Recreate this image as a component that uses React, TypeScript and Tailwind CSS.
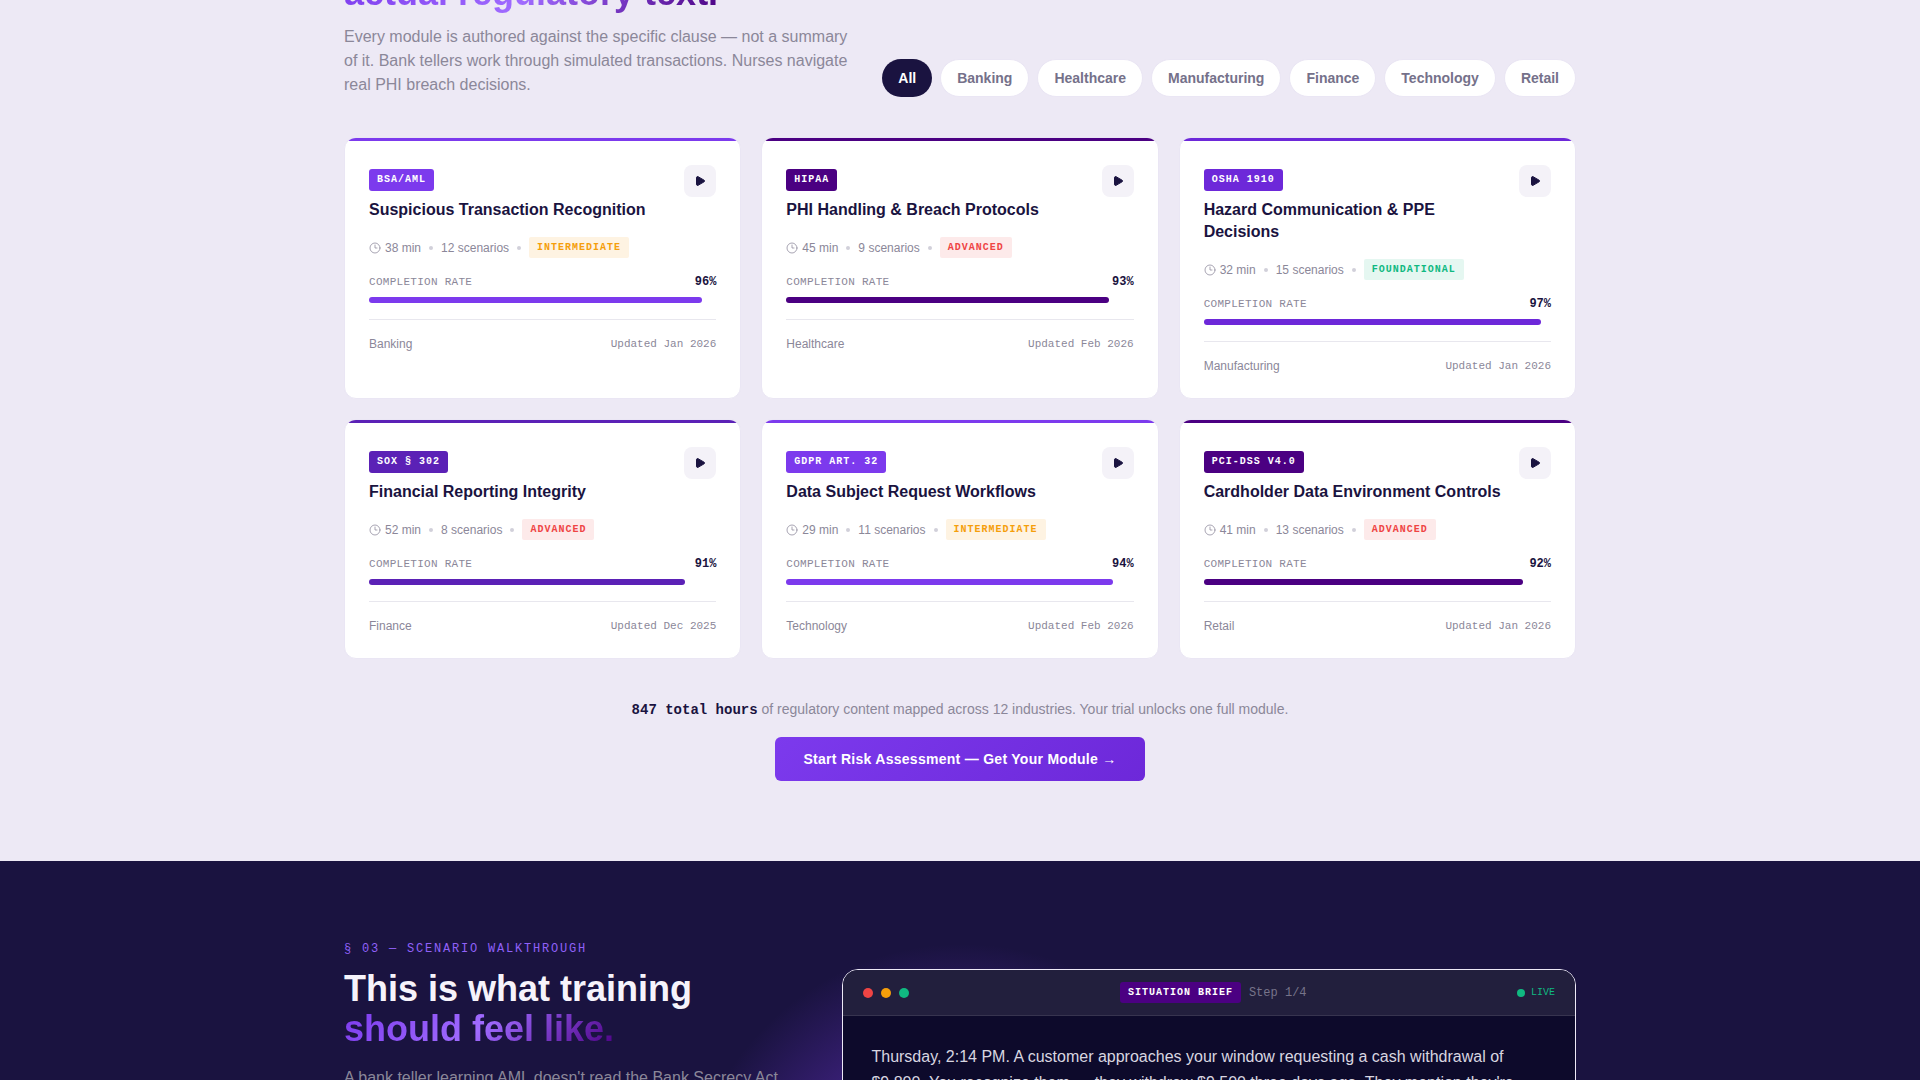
import { Clock3, Play } from "lucide-react";

const filters = ["All", "Banking", "Healthcare", "Manufacturing", "Finance", "Technology", "Retail"];

const levels = {
  INTERMEDIATE: "bg-[#fef3e2] text-[#f59e0b]",
  ADVANCED: "bg-[#fdeaea] text-[#ef4444]",
  FOUNDATIONAL: "bg-[#e5f7f1] text-[#10b981]",
};

type Module = {
  code: string;
  title: string;
  minutes: number;
  scenarios: number;
  level: keyof typeof levels;
  rate: number;
  industry: string;
  updated: string;
  color: string;
};

const modules: Module[] = [
  { code: "BSA/AML", title: "Suspicious Transaction Recognition", minutes: 38, scenarios: 12, level: "INTERMEDIATE", rate: 96, industry: "Banking", updated: "Jan 2026", color: "bg-[#7c3aed]" },
  { code: "HIPAA", title: "PHI Handling & Breach Protocols", minutes: 45, scenarios: 9, level: "ADVANCED", rate: 93, industry: "Healthcare", updated: "Feb 2026", color: "bg-[#4b0082]" },
  { code: "OSHA 1910", title: "Hazard Communication & PPE Decisions", minutes: 32, scenarios: 15, level: "FOUNDATIONAL", rate: 97, industry: "Manufacturing", updated: "Jan 2026", color: "bg-[#6d28d9]" },
  { code: "SOX § 302", title: "Financial Reporting Integrity", minutes: 52, scenarios: 8, level: "ADVANCED", rate: 91, industry: "Finance", updated: "Dec 2025", color: "bg-[#5b21b6]" },
  { code: "GDPR ART. 32", title: "Data Subject Request Workflows", minutes: 29, scenarios: 11, level: "INTERMEDIATE", rate: 94, industry: "Technology", updated: "Feb 2026", color: "bg-[#7c3aed]" },
  { code: "PCI-DSS V4.0", title: "Cardholder Data Environment Controls", minutes: 41, scenarios: 13, level: "ADVANCED", rate: 92, industry: "Retail", updated: "Jan 2026", color: "bg-[#4b0082]" },
];

const Dot = () => <span className="size-1 rounded-full bg-[#d1d0da]" />;

const ModuleCard = ({ module }: { module: Module }) => {
  return (
    <article className="overflow-hidden rounded-xl border border-[#eae6f4] bg-white">
      <div className={`h-[3px] ${module.color}`} />
      <div className="p-6">
        <div className="flex items-start justify-between gap-3">
          <div className="pt-1">
            <span className={`block w-fit rounded-[3px] px-2 py-1 font-['Liberation_Mono',monospace] text-[10px] leading-[14px] font-bold tracking-widest text-white ${module.color}`}>
              {module.code}
            </span>
            <h3 className="mt-2 text-base leading-[22px] font-bold text-[#1a1340]">{module.title}</h3>
          </div>
          <button type="button" aria-label={`Play ${module.title}`} className="flex size-8 shrink-0 items-center justify-center rounded-lg bg-[#f4f2f8]">
            <Play className="size-3 fill-[#1a1340] text-[#1a1340]" />
          </button>
        </div>

        <div className="mt-4 flex items-center gap-2 text-xs text-[#8b8799]">
          <span className="flex items-center gap-1">
            <Clock3 className="size-3" strokeWidth={1.5} />
            {module.minutes} min
          </span>
          <Dot />
          <span>{module.scenarios} scenarios</span>
          <Dot />
          <span className={`rounded-[2px] px-2 pt-1 pb-[3px] font-['Liberation_Mono',monospace] text-[10px] leading-[14px] font-bold tracking-widest ${levels[module.level]}`}>
            {module.level}
          </span>
        </div>

        <div className="mt-4 mb-[7px] flex items-center justify-between font-['Liberation_Mono',monospace] leading-4">
          <span className="text-[11px] tracking-wide text-[#8b8799]">COMPLETION RATE</span>
          <span className="text-xs font-bold text-[#1a1340]">{module.rate}%</span>
        </div>
        <div className="h-1.5">
          <div className={`h-full rounded-full ${module.color}`} style={{ width: `${module.rate}%` }} />
        </div>

        <div className="mt-4 flex items-center justify-between border-t border-[#e8e7ee] pt-4 text-[#8b8799]">
          <span className="text-xs leading-4">{module.industry}</span>
          <span className="font-['Liberation_Mono',monospace] text-[11px] leading-4">Updated {module.updated}</span>
        </div>
      </div>
    </article>
  );
};

const Library = () => {
  return (
    <section className="bg-[#ede9f5] pb-20">
      <div className="mx-auto max-w-7xl px-6">
        <div className="mb-10 flex items-end justify-between gap-6">
          <div className="-mt-[27px] max-w-[520px]">
            <h2 className="mb-3 w-fit bg-linear-[135deg] from-[#7c3aed] via-[#a06bff] to-[#4b0082] bg-clip-text text-4xl leading-10 font-bold text-transparent">
              actual regulatory text.
            </h2>
            <p className="text-base leading-6 text-[#8b8799]">
              Every module is authored against the specific clause — not a summary of it. Bank tellers work through
              simulated transactions. Nurses navigate real PHI breach decisions.
            </p>
          </div>
          <div className="flex shrink-0 gap-2">
            {filters.map((filter, i) => (
              <button
                key={filter}
                type="button"
                className={`rounded-full text-sm leading-5 font-semibold ${
                  i === 0 ? "bg-[#1a1340] px-4 py-[9px] text-white" : "border border-[#eae6f4] bg-white px-4 py-2 text-[#75718a]"
                }`}
              >
                {filter}
              </button>
            ))}
          </div>
        </div>

        <div className="grid grid-cols-3 gap-5">
          {modules.map((module) => (
            <ModuleCard key={module.code} module={module} />
          ))}
        </div>

        <div className="mt-10 flex flex-col items-center gap-4">
          <p className="text-sm leading-[21px] text-[#8b8799]">
            <strong className="font-['Liberation_Mono',monospace] text-[#1a1340]">847 total hours</strong> of regulatory
            content mapped across 12 industries. Your trial unlocks one full module.
          </p>
          <a href="#assessment" className="rounded-md bg-linear-[135deg] from-[#7c3aed] to-[#6d28d9] px-7 py-3 text-sm leading-5 font-bold tracking-[0.02em] text-white">
            Start Risk Assessment — Get Your Module →
          </a>
        </div>
      </div>
    </section>
  );
};

const Walkthrough = () => {
  return (
    <section className="bg-[#1a1340] py-20">
      <div className="mx-auto grid max-w-7xl grid-cols-[5fr_8fr] gap-10 px-6">
        <div className="relative z-10">
          <p className="font-['Liberation_Mono',monospace] text-xs leading-4 tracking-[0.15em] text-[#9061f9]">
            § 03 — SCENARIO WALKTHROUGH
          </p>
          <h2 className="mt-3 text-4xl leading-10 font-bold text-[#f6f3fb]">
            This is what training
            <span className="block w-fit bg-linear-[135deg] from-[#7c3aed] via-[#a06bff] to-[#4b0082] bg-clip-text text-transparent">
              should feel like.
            </span>
          </h2>
          <p className="mt-4 text-base leading-[26px] text-[#8b8799]">
            A bank teller learning AML doesn't read the Bank Secrecy Act
          </p>
        </div>

        <div className="relative pt-7">
          {/* glow behind the scenario window */}
          <div className="absolute top-0 -left-40 size-[560px] rounded-full bg-[radial-gradient(circle,#7c3aed_0%,transparent_70%)] opacity-85" />
          <div className="relative overflow-hidden rounded-2xl border border-[#ede9f6] bg-[#0d0a2b]">
            <div className="flex items-center justify-between border-b border-[#37344f] bg-[#221f3d] px-5 py-3">
              <div className="flex gap-2">
                <span className="size-2.5 rounded-full bg-[#ef4444]" />
                <span className="size-2.5 rounded-full bg-[#f59e0b]" />
                <span className="size-2.5 rounded-full bg-[#10b981]" />
              </div>
              <div className="flex items-center gap-2 font-['Liberation_Mono',monospace]">
                <span className="rounded-[3px] bg-[#4b0082] px-2 pt-1 pb-[3px] text-[10px] leading-[14px] font-bold tracking-widest text-white">
                  SITUATION BRIEF
                </span>
                <span className="text-xs text-[#77748a]">Step 1/4</span>
              </div>
              <span className="flex items-center gap-1.5 font-['Liberation_Mono',monospace] text-[10px] text-[#10b981]">
                <span className="size-2 rounded-full bg-[#10b981]" />
                LIVE
              </span>
            </div>
            <p className="px-7 py-7 text-base leading-[26px] text-[#d8d6e0]">
              Thursday, 2:14 PM. A customer approaches your window requesting a cash withdrawal of $9,800. You recognize
              them — they withdrew $9,500 three days ago. They mention they're
            </p>
          </div>
        </div>
      </div>
    </section>
  );
};

const App = () => {
  return (
    <main className="h-screen overflow-hidden bg-[#1a1340] font-['Liberation_Sans',Arial,sans-serif]">
      <Library />
      <Walkthrough />
    </main>
  );
};

export default App;
